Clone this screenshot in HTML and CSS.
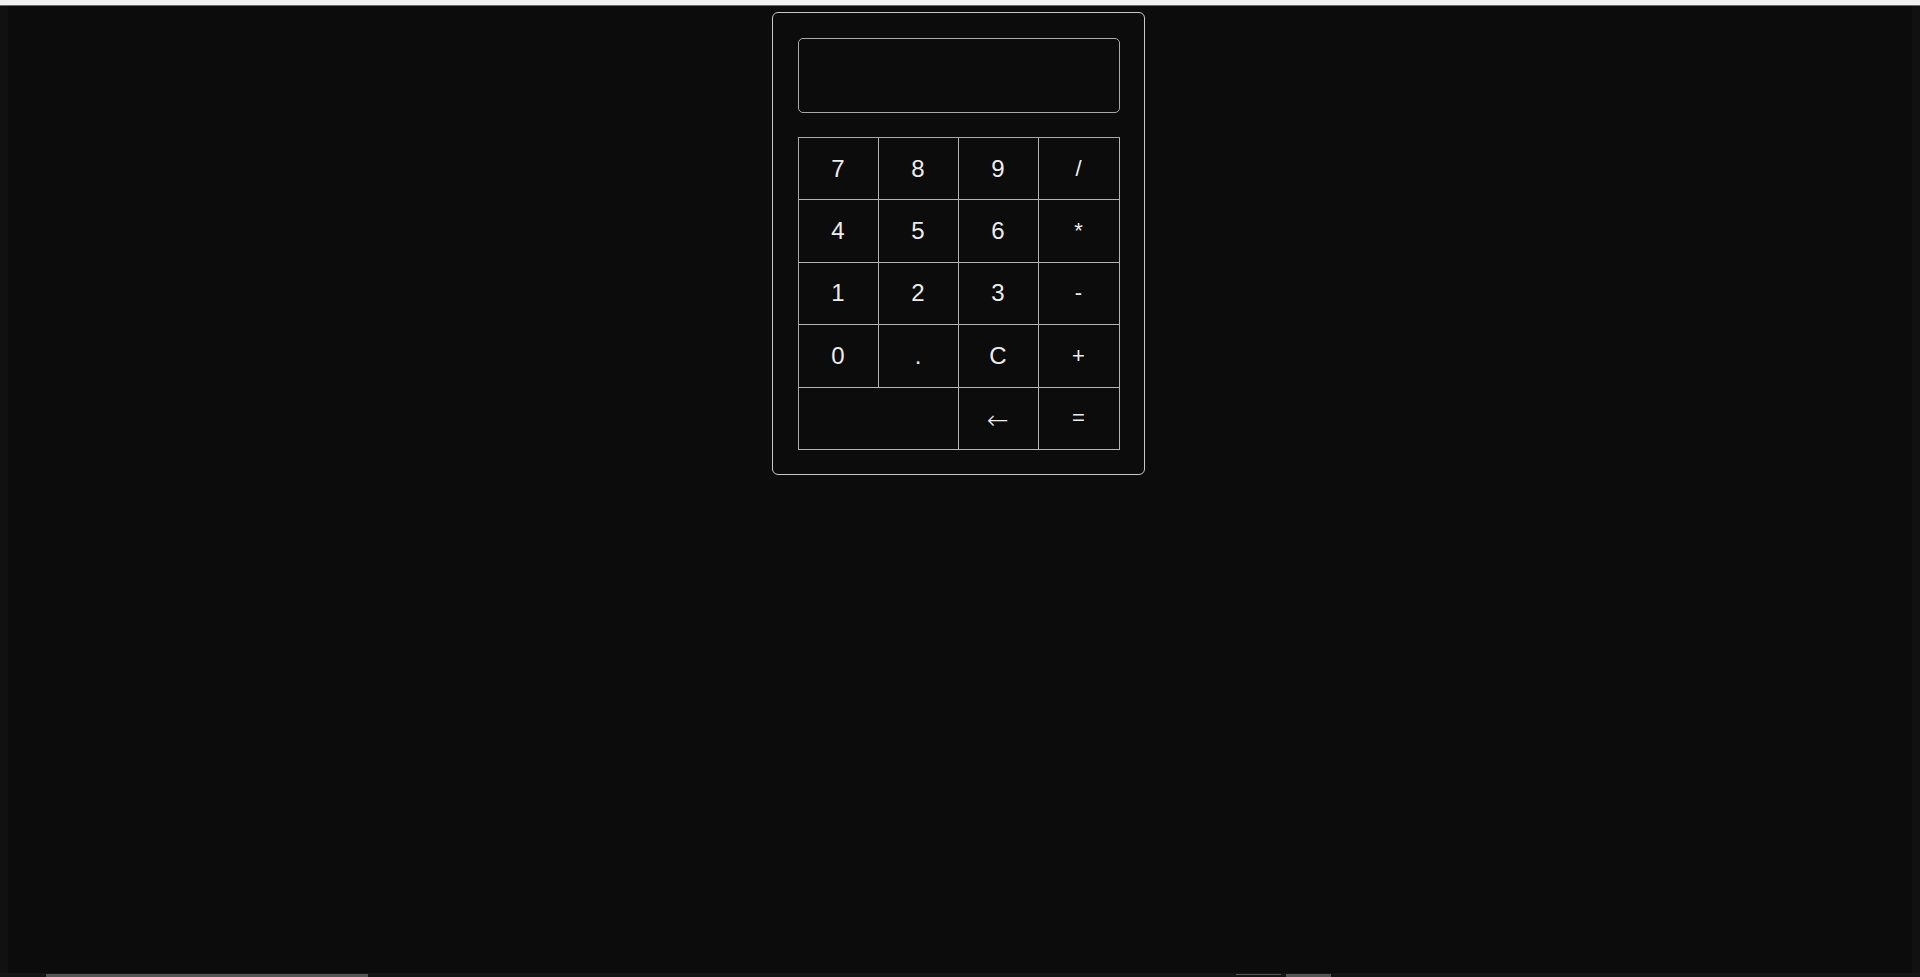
FILE: index.html
```html
<!DOCTYPE html>
<html lang="en">
<head>
<meta charset="utf-8">
<title>Calculator</title>
<link rel="stylesheet" href="styles.css">
</head>
<body>
<div class="topbar"></div>
<div class="middle">
  <div class="side"></div>
  <main class="main">
    <div class="calculator">
      <div class="display"></div>
      <div class="keys">
        <button class="key">7</button>
        <button class="key">8</button>
        <button class="key">9</button>
        <button class="key op">/</button>
        <button class="key">4</button>
        <button class="key">5</button>
        <button class="key">6</button>
        <button class="key op">*</button>
        <button class="key">1</button>
        <button class="key">2</button>
        <button class="key">3</button>
        <button class="key op">-</button>
        <button class="key">0</button>
        <button class="key">.</button>
        <button class="key">C</button>
        <button class="key op">+</button>
        <div class="key blank"></div>
        <button class="key arrow">←</button>
        <button class="key op">=</button>
      </div>
    </div>
  </main>
  <div class="side"></div>
</div>
<div class="bottombar">
  <span class="seg seg1"></span>
  <span class="seg seg2"></span>
  <span class="seg seg3"></span>
</div>
</body>
</html>
```
FILE: styles.css
```css
html, body {
  margin: 0;
  padding: 0;
  height: 100%;
}
body {
  display: flex;
  flex-direction: column;
  background: #0c0c0c;
  font-family: "Liberation Sans", Arial, sans-serif;
  overflow: hidden;
}
.topbar {
  height: 5px;
  background: #f2f2f2;
  border-bottom: 1px solid #6a6a6a;
  flex: none;
}
.middle {
  flex: 1;
  display: flex;
  min-height: 0;
}
.side {
  width: 8px;
  background: #111111;
  flex: none;
}
.main {
  flex: 1;
  display: flex;
  justify-content: center;
  align-items: flex-start;
  padding-top: 6px;
  padding-right: 4px;
}
.calculator {
  width: 322px;
  padding: 25px 24px 24px 25px;
  border: 1px solid #c8c8c8;
  border-radius: 6px;
  background: #0c0c0c;
  display: flex;
  flex-direction: column;
  gap: 24px;
}
.display {
  height: 73px;
  border: 1px solid #a8a8a8;
  border-radius: 5px;
}
.keys {
  display: grid;
  grid-template-columns: 80px 80px 80px 81px;
  grid-template-rows: repeat(5, 62.4px);
  border-top: 1px solid #a8a8a8;
  border-left: 1px solid #a8a8a8;
}
.key {
  margin: 0;
  padding: 0;
  background: transparent;
  border: none;
  border-right: 1px solid #b4b4b4;
  border-bottom: 1px solid #b4b4b4;
  color: #ececec;
  font-family: "Liberation Sans", Arial, sans-serif;
  font-size: 24px;
  display: flex;
  align-items: center;
  justify-content: center;
}
.key.op {
  font-size: 22px;
}
.key.arrow {
  font-family: "DejaVu Sans", sans-serif;
  font-size: 26px;
  font-weight: 300;
  padding-top: 4px;
}
.blank {
  grid-column: span 2;
}
.bottombar {
  height: 4px;
  flex: none;
  background: #151515;
  position: relative;
}
.seg {
  position: absolute;
  top: 1px;
  height: 3px;
  background: #555555;
}
.seg1 { left: 46px; width: 322px; }
.seg2 { left: 1236px; width: 45px; height: 1px; }
.seg3 { left: 1286px; width: 45px; }
```
